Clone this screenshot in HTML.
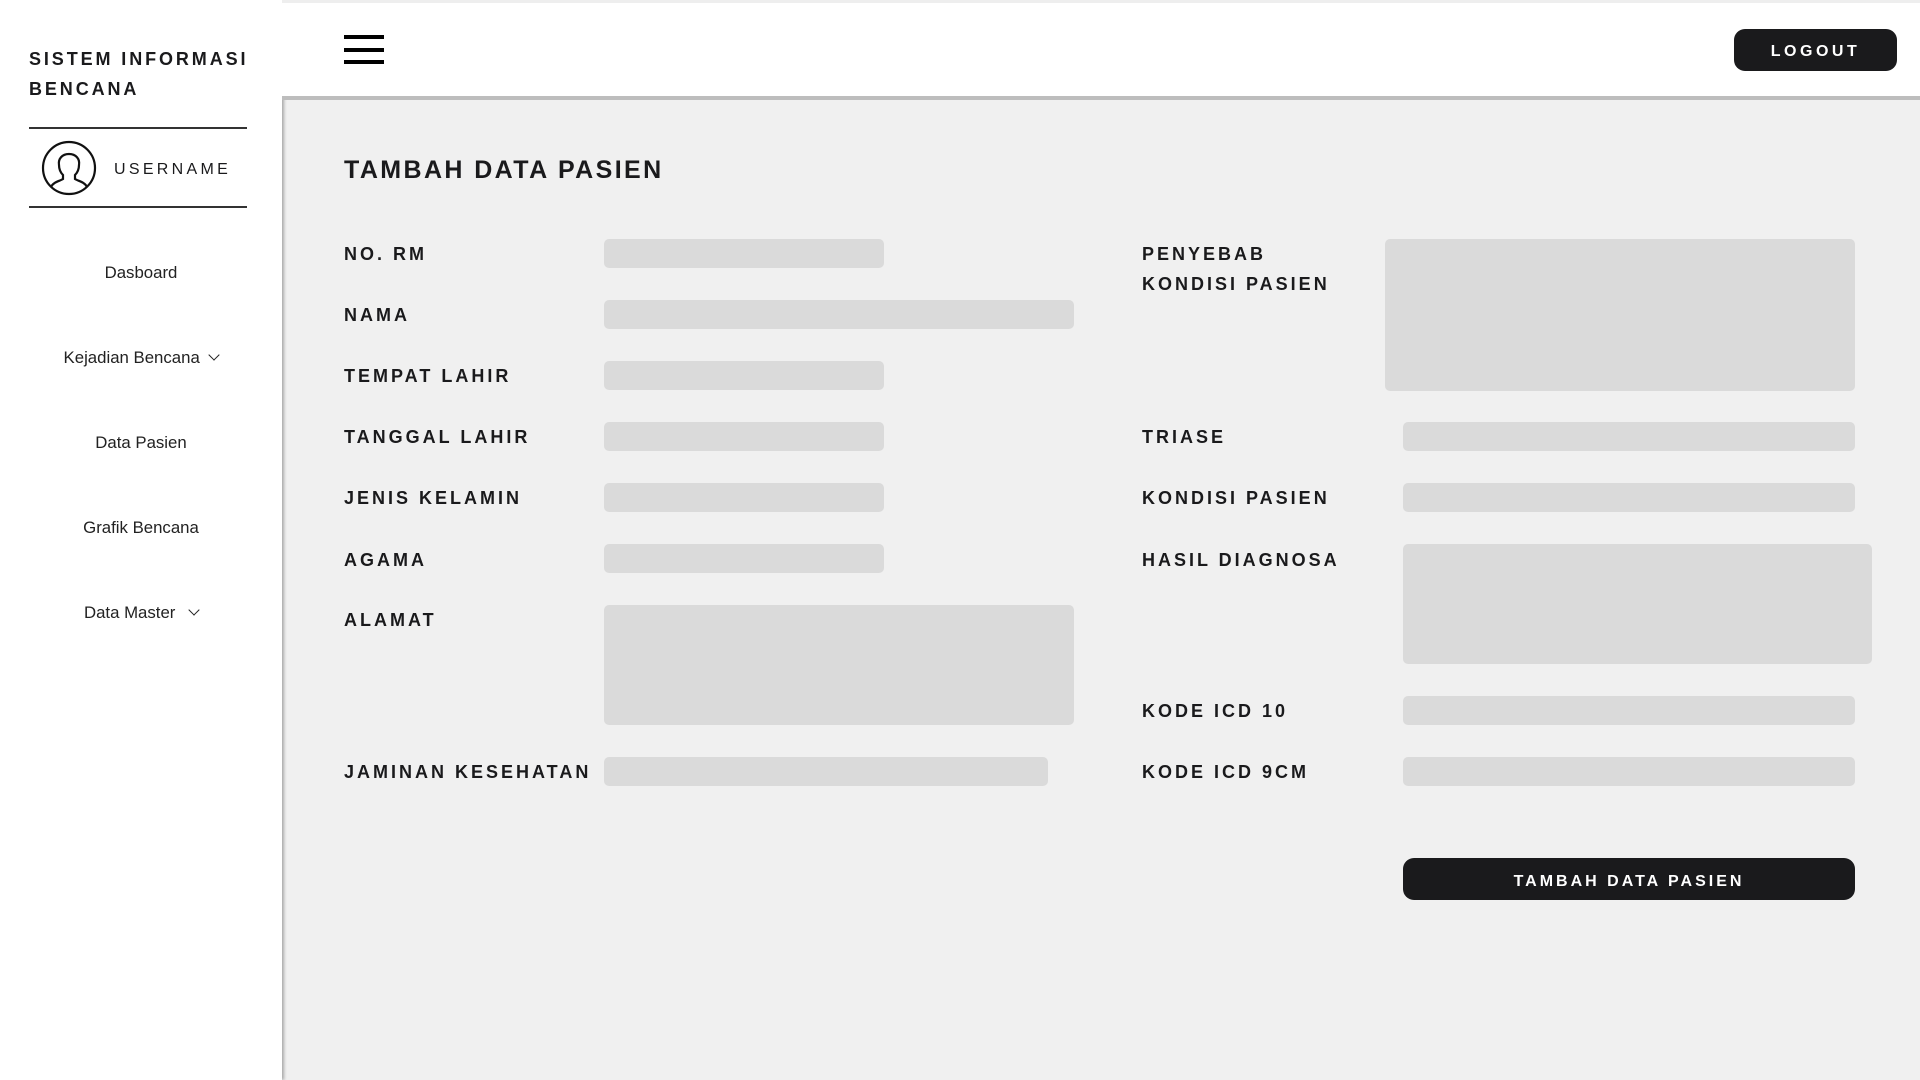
<!DOCTYPE html>
<html><head><meta charset="utf-8"><style>
*{margin:0;padding:0;box-sizing:border-box}
body{width:1920px;height:1080px;background:#f0f0f0;font-family:"Liberation Sans",sans-serif;color:#1a1a1c;position:relative;overflow:hidden}
.a{position:absolute}
.side{left:0;top:0;width:282px;height:1080px;background:#fff;box-shadow:2px 0 3px rgba(0,0,0,.3)}
.top{left:282px;top:0;width:1638px;height:100px;background:#fff;border-top:3px solid #eee;border-bottom:4px solid #bdbdbd}
.lbl{font-weight:bold;font-size:18px;letter-spacing:3px;line-height:30px;left:344px}
.r{left:1142px}
.f{background:#dadada;border-radius:5px}
.menu{font-size:16.8px;width:282px;text-align:center;left:0;color:#222}
.bar{left:344px;width:40px;height:4px;background:#000}
</style></head><body>
<div class="a side"></div>
<div class="a" style="left:29px;top:44px;font-weight:bold;font-size:18px;letter-spacing:2.9px;line-height:30px">SISTEM INFORMASI<br>BENCANA</div>
<div class="a" style="left:29px;top:127px;width:218px;height:2px;background:#333"></div>
<svg class="a" style="left:41px;top:140px" width="56" height="56" viewBox="0 0 56 56" fill="none" stroke="#111" stroke-width="2.2"><circle cx="28" cy="28" r="26"/><path d="M10 47c2-5 9-6 12-8v-4c-3-3-4-6-4-10-1-6 3-11 10-11s11 5 10 11c0 4-1 7-4 10v4c3 2 10 3 12 8"/></svg>
<div class="a" style="left:114px;top:160px;font-size:16px;letter-spacing:3.3px;line-height:20px">USERNAME</div>
<div class="a" style="left:29px;top:206px;width:218px;height:2px;background:#333"></div>
<div class="a menu" style="top:263px">Dasboard</div>
<div class="a menu" style="top:348px">Kejadian Bencana <span style="display:inline-block;width:8px;height:8px;border-right:1.6px solid #222;border-bottom:1.6px solid #222;transform:rotate(45deg);margin:0 0 4px 6px"></span></div>
<div class="a menu" style="top:433px">Data Pasien</div>
<div class="a menu" style="top:518px">Grafik Bencana</div>
<div class="a menu" style="top:603px">Data Master <span style="display:inline-block;width:8px;height:8px;border-right:1.6px solid #222;border-bottom:1.6px solid #222;transform:rotate(45deg);margin:0 0 4px 10px"></span></div>

<div class="a top"></div>
<div class="a bar" style="top:35px"></div><div class="a bar" style="top:48px"></div><div class="a bar" style="top:60px"></div>
<div class="a" style="left:1734px;top:29px;width:163px;height:42px;background:#1a1a1c;border-radius:11px;color:#fff;font-weight:bold;font-size:16px;letter-spacing:3.5px;text-align:center;line-height:46px">LOGOUT</div>

<div class="a" style="left:344px;top:156px;font-weight:bold;font-size:25px;letter-spacing:2.4px">TAMBAH DATA PASIEN</div>

<div class="a lbl" style="top:239px">NO. RM</div>
<div class="a lbl" style="top:300px">NAMA</div>
<div class="a lbl" style="top:361px">TEMPAT LAHIR</div>
<div class="a lbl" style="top:422px">TANGGAL LAHIR</div>
<div class="a lbl" style="top:483px">JENIS KELAMIN</div>
<div class="a lbl" style="top:545px">AGAMA</div>
<div class="a lbl" style="top:605px">ALAMAT</div>
<div class="a lbl" style="top:757px">JAMINAN KESEHATAN</div>

<div class="a f" style="left:604px;top:239px;width:280px;height:29px"></div>
<div class="a f" style="left:604px;top:300px;width:470px;height:29px"></div>
<div class="a f" style="left:604px;top:361px;width:280px;height:29px"></div>
<div class="a f" style="left:604px;top:422px;width:280px;height:29px"></div>
<div class="a f" style="left:604px;top:483px;width:280px;height:29px"></div>
<div class="a f" style="left:604px;top:544px;width:280px;height:29px"></div>
<div class="a f" style="left:604px;top:605px;width:470px;height:120px"></div>
<div class="a f" style="left:604px;top:757px;width:444px;height:29px"></div>

<div class="a lbl r" style="top:239px">PENYEBAB<br>KONDISI PASIEN</div>
<div class="a lbl r" style="top:422px">TRIASE</div>
<div class="a lbl r" style="top:483px">KONDISI PASIEN</div>
<div class="a lbl r" style="top:545px">HASIL DIAGNOSA</div>
<div class="a lbl r" style="top:696px">KODE ICD 10</div>
<div class="a lbl r" style="top:757px">KODE ICD 9CM</div>

<div class="a f" style="left:1385px;top:239px;width:470px;height:152px"></div>
<div class="a f" style="left:1403px;top:422px;width:452px;height:29px"></div>
<div class="a f" style="left:1403px;top:483px;width:452px;height:29px"></div>
<div class="a f" style="left:1403px;top:544px;width:469px;height:120px"></div>
<div class="a f" style="left:1403px;top:696px;width:452px;height:29px"></div>
<div class="a f" style="left:1403px;top:757px;width:452px;height:29px"></div>

<div class="a" style="left:1403px;top:858px;width:452px;height:42px;background:#1a1a1c;border-radius:11px;color:#fff;font-weight:bold;font-size:16px;letter-spacing:3px;text-align:center;line-height:47px">TAMBAH DATA PASIEN</div>
</body></html>
